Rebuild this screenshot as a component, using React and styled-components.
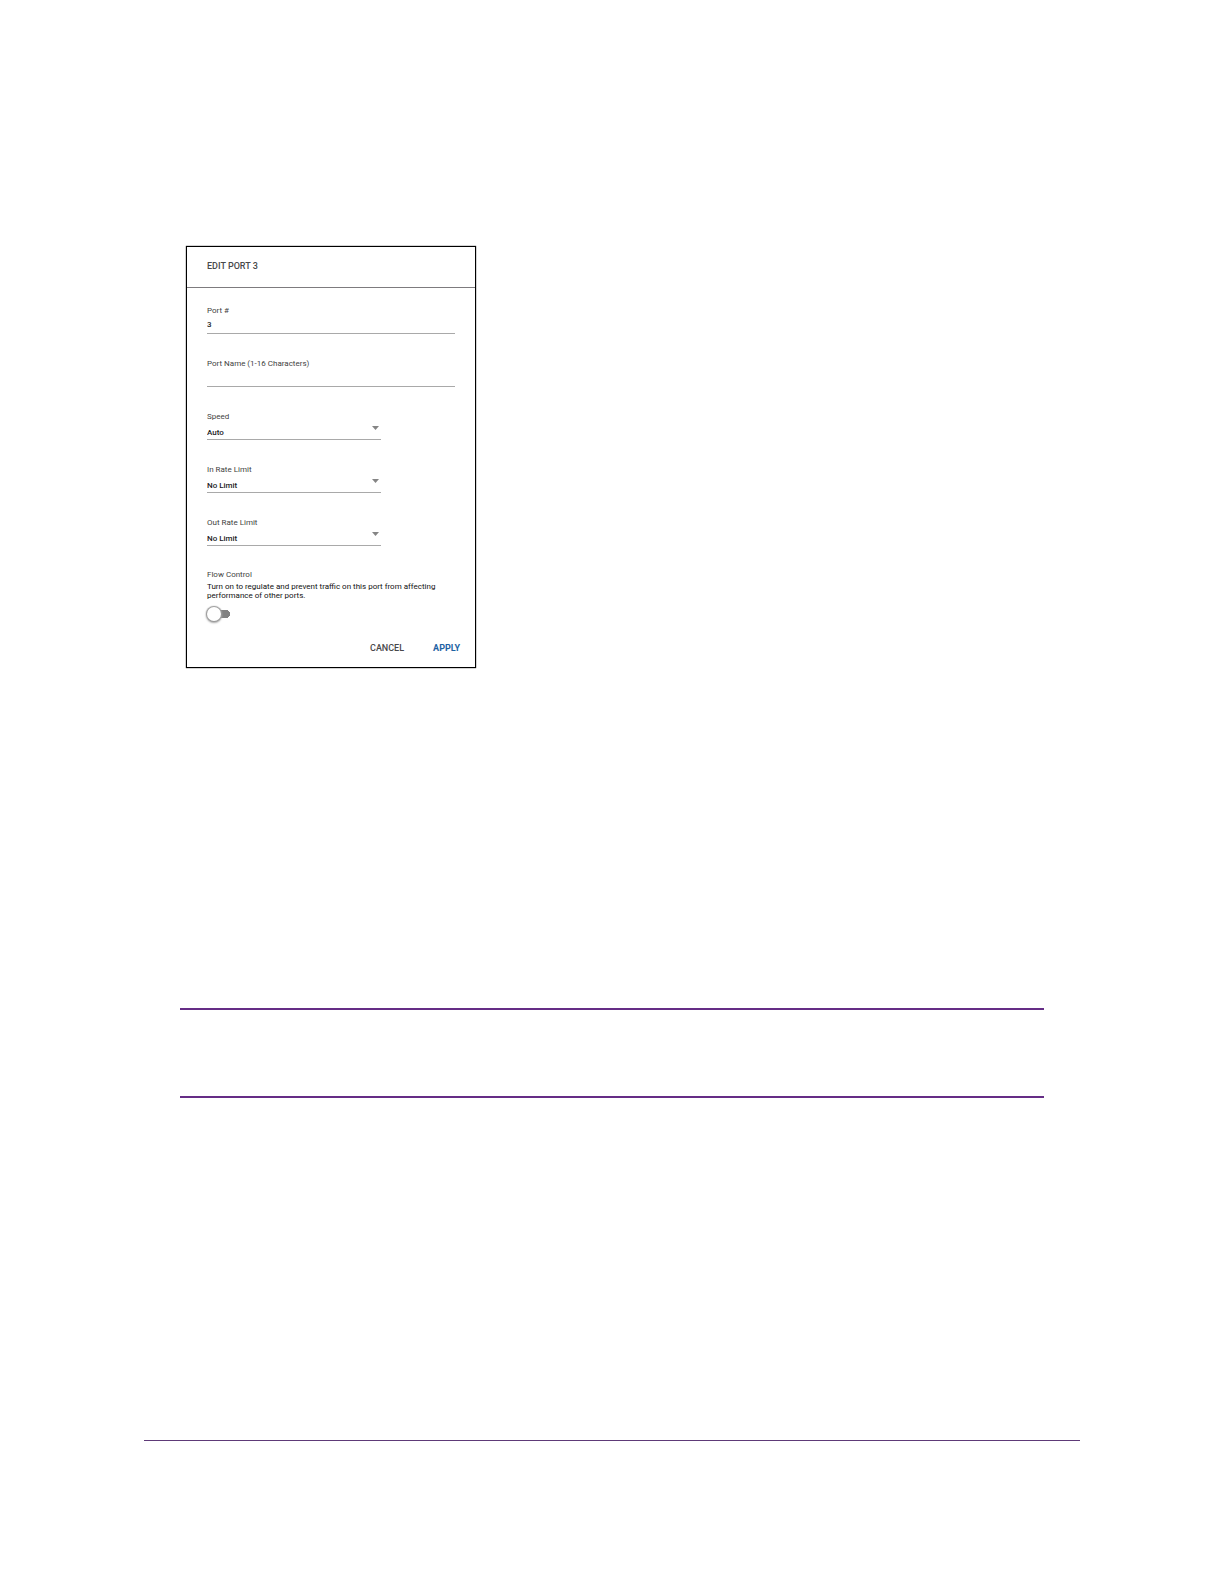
import React from "react";
import styled, { createGlobalStyle } from "styled-components";

const GlobalStyle = createGlobalStyle`
  *, *::before, *::after { box-sizing: border-box; }
  body {
    margin: 0;
    background: #fff;
    font-family: Roboto, "Liberation Sans", sans-serif;
  }
`;

const Page = styled.div`
  display: flex;
  flex-direction: column;
  padding: 246px 144px 143px;
`;

const Content = styled.main`
  display: flex;
  flex-direction: column;
  gap: 340px;
  padding: 0 36px;
`;

const Dialog = styled.form`
  width: 290px;
  margin-left: 6px;
  border: 1px solid #000;
  background: #fff;
  box-shadow: 0 0 1px #000;
`;

const DialogHeader = styled.header`
  padding: 13px 20px 15px;
  border-bottom: 1px solid #7d7b7e;
`;

const Title = styled.h1`
  margin: 0;
  font-size: 9px;
  line-height: 12px;
  font-weight: 500;
  color: #48484a;
`;

const Fields = styled.div`
  display: flex;
  flex-direction: column;
  gap: 25px;
  padding: 18px 20px 0;
`;

const Field = styled.div`
  display: flex;
  flex-direction: column;
  position: relative;
  width: ${({ $narrow }) => ($narrow ? "174px" : "auto")};
`;

const Label = styled.label`
  font-size: 8px;
  line-height: 10px;
  color: #3f3f42;
`;

const TextInput = styled.input`
  height: 18px;
  padding: 0;
  border: 0;
  border-bottom: 1px solid #a9a9a9;
  border-radius: 0;
  background: transparent;
  color: #222;
  font: 500 8px/10px Roboto, "Liberation Sans", sans-serif;
  outline: none;
`;

const Select = styled.select`
  appearance: none;
  height: 18px;
  padding: 4px 12px 0 0;
  border: 0;
  border-bottom: 1px solid #a9a9a9;
  border-radius: 0;
  background: transparent;
  color: #1c1c1e;
  font: 500 8px/10px Roboto, "Liberation Sans", sans-serif;
  outline: none;
`;

const Arrow = styled.svg`
  position: absolute;
  right: 2px;
  top: 14px;
  width: 7px;
  height: 4px;
  fill: #858585;
  pointer-events: none;
`;

const FlowControl = styled.section`
  display: flex;
  flex-direction: column;
  align-items: flex-start;
  padding: 24px 20px 0;
`;

const Hint = styled.p`
  margin: 2px 0 6px;
  font-size: 8px;
  line-height: 9px;
  color: #111;
`;

const Toggle = styled.input`
  appearance: none;
  display: flex;
  align-items: center;
  width: 23px;
  height: 16px;
  margin: 0;
  background: linear-gradient(#828282, #828282) 8px 4px / 11px 8px no-repeat,
    radial-gradient(circle at 19px 8px, #828282 4px, transparent 4px);
  cursor: pointer;

  &::before {
    content: "";
    width: 14px;
    height: 14px;
    border-radius: 50%;
    background: #fff;
    box-shadow: 0 0 1px 1px #999, 0 1px 2px 1px #aaa;
  }

  &:checked::before {
    margin-left: 9px;
  }
`;

const Actions = styled.footer`
  display: flex;
  justify-content: flex-end;
  gap: 29px;
  padding: 20px 15px 13px;
`;

const Action = styled.button`
  padding: 0;
  border: 0;
  background: none;
  color: ${({ $primary }) => ($primary ? "#1d62a3" : "#48484a")};
  font: ${({ $primary }) => ($primary ? 700 : 500)} 9px/12px Roboto, "Liberation Sans", sans-serif;
  cursor: pointer;
`;

const NoteFrame = styled.aside`
  height: 90px;
  border-top: 2px solid #652d86;
  border-bottom: 2px solid #652d86;
`;

const PageFooter = styled.footer`
  margin-top: 342px;
  border-top: 1px solid #5e3a78;
`;

function SelectField({ id, label, options }) {
  return (
    <Field $narrow>
      <Label htmlFor={id}>{label}</Label>
      <Select id={id}>
        {options.map((option) => (
          <option key={option}>{option}</option>
        ))}
      </Select>
      <Arrow viewBox="0 0 7 4" aria-hidden="true">
        <path d="M0 0h7L3.5 4z" />
      </Arrow>
    </Field>
  );
}

export default function App() {
  return (
    <>
      <GlobalStyle />
      <Page>
        <Content>
          <Dialog onSubmit={(event) => event.preventDefault()}>
            <DialogHeader>
              <Title>EDIT PORT 3</Title>
            </DialogHeader>
            <Fields>
              <Field>
                <Label htmlFor="port">Port #</Label>
                <TextInput id="port" defaultValue="3" readOnly />
              </Field>
              <Field>
                <Label htmlFor="name">Port Name (1-16 Characters)</Label>
                <TextInput id="name" maxLength={16} />
              </Field>
              <SelectField id="speed" label="Speed" options={["Auto"]} />
              <SelectField id="in-rate" label="In Rate Limit" options={["No Limit"]} />
              <SelectField id="out-rate" label="Out Rate Limit" options={["No Limit"]} />
            </Fields>
            <FlowControl>
              <Label htmlFor="flow">Flow Control</Label>
              <Hint id="flow-hint">
                Turn on to regulate and prevent traffic on this port from affecting performance of other ports.
              </Hint>
              <Toggle id="flow" type="checkbox" role="switch" aria-describedby="flow-hint" />
            </FlowControl>
            <Actions>
              <Action type="button">CANCEL</Action>
              <Action type="submit" $primary>APPLY</Action>
            </Actions>
          </Dialog>
          <NoteFrame />
        </Content>
        <PageFooter />
      </Page>
    </>
  );
}
